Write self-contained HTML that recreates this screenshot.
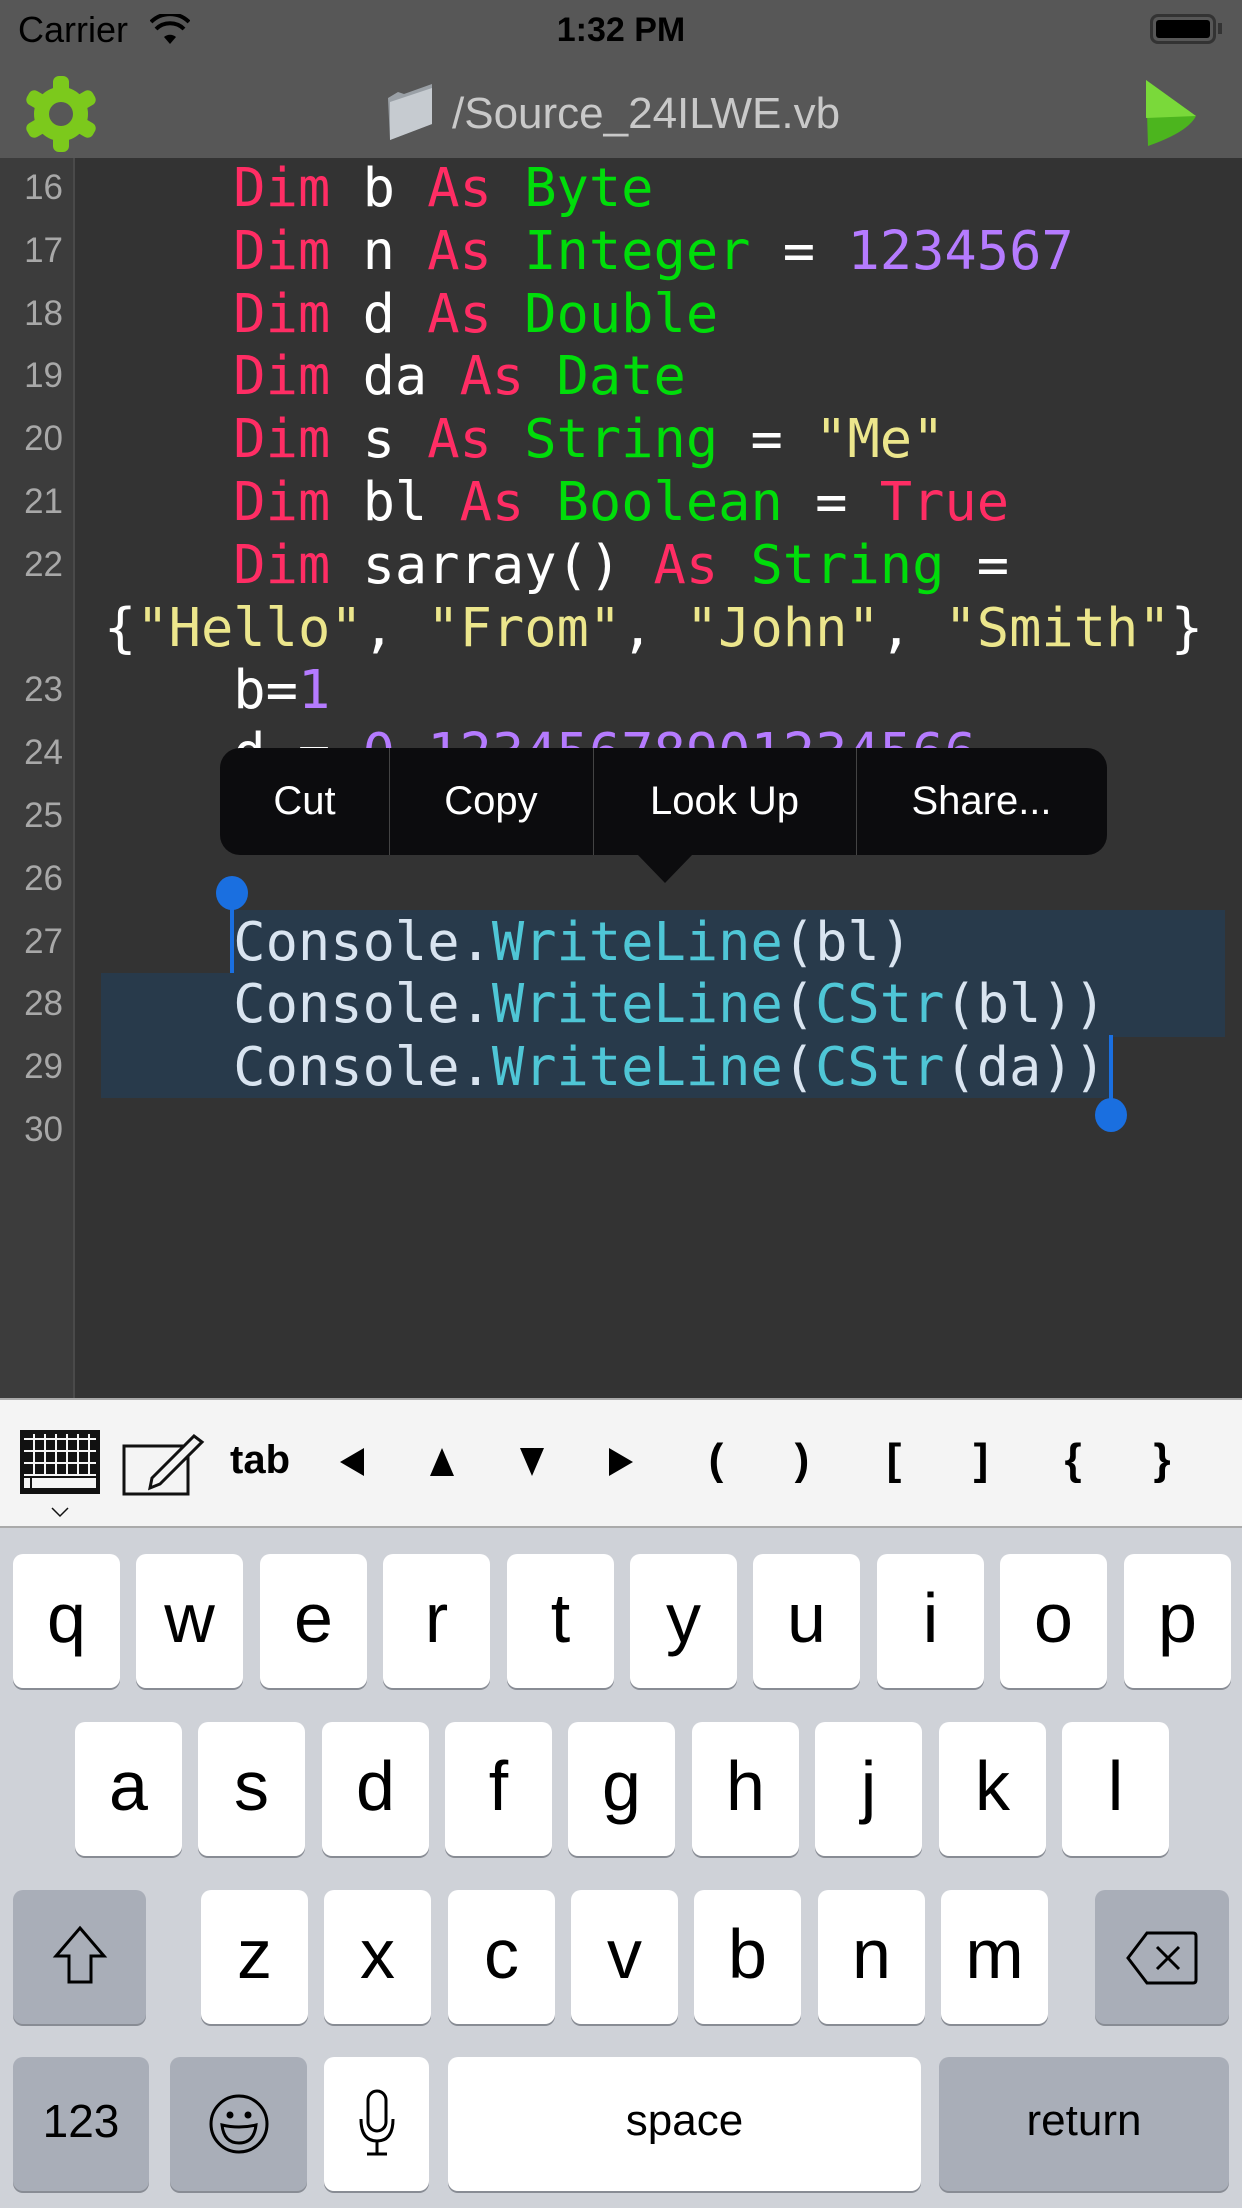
<!DOCTYPE html>
<html><head><meta charset="utf-8"><style>
*{margin:0;padding:0;box-sizing:border-box}
body{width:1242px;height:2208px;overflow:hidden;background:#333;position:relative;font-family:"Liberation Sans",sans-serif}
.abs{position:absolute}
#top{left:0;top:0;width:1242px;height:158px;background:#575757}
#gut{left:0;top:158px;width:75px;height:1240px;background:#3c3c3c;border-right:2px solid #4a4a4a}
.ln{position:absolute;left:0;width:63px;text-align:right;font-size:35px;color:#a8a8a8;line-height:62.8px}
.cl{position:absolute;left:104px;font-family:"DejaVu Sans Mono",monospace;font-size:53.7px;line-height:62.8px;white-space:pre;color:#fff}
.k{color:#ff2d64}.t{color:#00dd0a}.n{color:#b57bff}.s{color:#ece68c}.c{color:#4fc6d6}
.sel{background:#283a4b;position:absolute}
.sl{color:#d9e4f0}
#tb{left:0;top:1398px;width:1242px;height:130px;background:#f4f4f4;border-top:2px solid #aaa;border-bottom:2px solid #aaa}
#kb{left:0;top:1528px;width:1242px;height:680px;background:#cfd2d8}
.key{position:absolute;width:107px;height:134px;background:#fff;border-radius:10px;box-shadow:0 2px 0 #888c94;text-align:center;font-size:70px;line-height:128px;color:#000}
.sp{background:#a9aeb8}
.tbi{position:absolute;top:1430px;font-size:44px;color:#000;line-height:60px;width:40px;text-align:center;margin-left:-20px}
</style></head><body>
<div id="top" class="abs"></div>
<div class="abs" style="left:18px;top:8px;font-size:36px;color:#000;line-height:44px">Carrier</div>
<svg class="abs" style="left:150px;top:14px" width="40" height="32" viewBox="0 0 40 32"><path d="M20 30 L26 23 A9 9 0 0 0 14 23 Z" fill="#000"/><path d="M6 15 A20 20 0 0 1 34 15" stroke="#000" stroke-width="4" fill="none"/><path d="M1 8 A27 27 0 0 1 39 8" stroke="#000" stroke-width="4" fill="none"/></svg>
<div class="abs" style="left:0;width:1242px;top:8px;text-align:center;font-size:34px;font-weight:bold;color:#000;line-height:44px">1:32 PM</div>
<div class="abs" style="left:1150px;top:14px;width:66px;height:30px;border:3px solid #333;border-radius:8px;padding:3px"><div style="width:100%;height:100%;background:#000;border-radius:3px"></div></div>
<div class="abs" style="left:1218px;top:23px;width:4px;height:11px;background:#333"></div>
<svg class="abs" style="left:22px;top:74px" width="78" height="80" viewBox="0 0 78 80"><g fill="#7cc91c"><circle cx="39" cy="40" r="27"/><rect x="31" y="2" width="16" height="76" rx="6"/><rect x="31" y="2" width="16" height="76" rx="6" transform="rotate(60 39 40)"/><rect x="31" y="2" width="16" height="76" rx="6" transform="rotate(120 39 40)"/></g><circle cx="39" cy="40" r="12" fill="#575757"/></svg>
<svg class="abs" style="left:384px;top:84px" width="52" height="56" viewBox="0 0 52 56"><path d="M4 14 L14 8 L20 10 L48 0 L48 40 L6 56 Z" fill="#9aa0a6"/><path d="M6 18 L48 4 L48 40 L6 56 Z" fill="#c6cbd0"/></svg>
<div class="abs" style="left:452px;top:84px;font-size:44px;color:#c9c9c9;line-height:60px">/Source_24ILWE.vb</div>
<svg class="abs" style="left:1144px;top:78px" width="56" height="70" viewBox="0 0 56 70"><path d="M2 2 L52 38 Q44 54 4 68 Z" fill="#4cb51e"/><path d="M2 2 L52 38 L2 40 Z" fill="#7ad93a"/></svg>
<div id="gut" class="abs"></div>
<div class="ln" style="top:157px">16</div><div class="ln" style="top:219.8px">17</div><div class="ln" style="top:282.6px">18</div><div class="ln" style="top:345.4px">19</div><div class="ln" style="top:408.2px">20</div><div class="ln" style="top:471px">21</div><div class="ln" style="top:533.8px">22</div><div class="ln" style="top:659.4px">23</div><div class="ln" style="top:722.2px">24</div><div class="ln" style="top:785px">25</div><div class="ln" style="top:847.8px">26</div><div class="ln" style="top:910.6px">27</div><div class="ln" style="top:973.4px">28</div><div class="ln" style="top:1036.2px">29</div><div class="ln" style="top:1099px">30</div>
<div class="sel" style="left:232px;top:910px;width:993px;height:64px"></div>
<div class="sel" style="left:101px;top:973px;width:1124px;height:64px"></div>
<div class="sel" style="left:101px;top:1036px;width:1011px;height:62px"></div>
<div class="cl" style="top:157px">    <span class="k">Dim</span> b <span class="k">As</span> <span class="t">Byte</span></div>
<div class="cl" style="top:219.8px">    <span class="k">Dim</span> n <span class="k">As</span> <span class="t">Integer</span> = <span class="n">1234567</span></div>
<div class="cl" style="top:282.6px">    <span class="k">Dim</span> d <span class="k">As</span> <span class="t">Double</span></div>
<div class="cl" style="top:345.4px">    <span class="k">Dim</span> da <span class="k">As</span> <span class="t">Date</span></div>
<div class="cl" style="top:408.2px">    <span class="k">Dim</span> s <span class="k">As</span> <span class="t">String</span> = <span class="s">"Me"</span></div>
<div class="cl" style="top:471px">    <span class="k">Dim</span> bl <span class="k">As</span> <span class="t">Boolean</span> = <span class="k">True</span></div>
<div class="cl" style="top:533.8px">    <span class="k">Dim</span> sarray() <span class="k">As</span> <span class="t">String</span> =</div>
<div class="cl" style="top:596.6px">{<span class="s">"Hello"</span>, <span class="s">"From"</span>, <span class="s">"John"</span>, <span class="s">"Smith"</span>}</div>
<div class="cl" style="top:659.4px">    b=<span class="n">1</span></div>
<div class="cl" style="top:722.2px">    d = <span class="n">0.12345678901234566</span></div>
<div class="cl sl" style="top:910.6px">    Console.<span class="c">WriteLine</span>(bl)</div>
<div class="cl sl" style="top:973.4px">    Console.<span class="c">WriteLine</span>(<span class="c">CStr</span>(bl))</div>
<div class="cl sl" style="top:1036.2px">    Console.<span class="c">WriteLine</span>(<span class="c">CStr</span>(da))</div>
<div class="abs" style="left:230px;top:893px;width:4px;height:80px;background:#1a6fe0"></div>
<div class="abs" style="left:216px;top:876px;width:32px;height:34px;border-radius:50%;background:#1a6fe0"></div>
<div class="abs" style="left:1109px;top:1035px;width:4px;height:80px;background:#1a6fe0"></div>
<div class="abs" style="left:1095px;top:1098px;width:32px;height:34px;border-radius:50%;background:#1a6fe0"></div>
<div class="abs" style="left:220px;top:748px;width:887px;height:107px;background:#0c0c0e;border-radius:20px"></div>
<svg class="abs" style="left:637px;top:854px" width="56" height="30"><path d="M0 0 L56 0 L28 29 Z" fill="#0c0c0e"/></svg>
<div class="abs" style="left:389px;top:748px;width:1px;height:107px;background:#444"></div>
<div class="abs" style="left:593px;top:748px;width:1px;height:107px;background:#444"></div>
<div class="abs" style="left:856px;top:748px;width:1px;height:107px;background:#444"></div>
<div class="abs" style="top:777px;left:220px;width:169px;text-align:center;color:#fff;font-size:40px;line-height:48px">Cut</div>
<div class="abs" style="top:777px;left:389px;width:204px;text-align:center;color:#fff;font-size:40px;line-height:48px">Copy</div>
<div class="abs" style="top:777px;left:593px;width:263px;text-align:center;color:#fff;font-size:40px;line-height:48px">Look Up</div>
<div class="abs" style="top:777px;left:856px;width:251px;text-align:center;color:#fff;font-size:40px;line-height:48px">Share...</div>
<div id="tb" class="abs"></div>
<svg class="abs" style="left:18px;top:1428px" width="86" height="96" viewBox="0 0 86 96"><rect x="2" y="2" width="80" height="64" fill="#111"/><g fill="#f4f4f4"><rect x="6" y="10" width="72" height="2"/><rect x="6" y="22" width="72" height="2"/><rect x="6" y="34" width="72" height="2"/><rect x="6" y="46" width="72" height="2"/><rect x="6" y="50" width="72" height="10"/></g><g fill="#f4f4f4"><rect x="15" y="6" width="2" height="40"/><rect x="26" y="6" width="2" height="40"/><rect x="37" y="6" width="2" height="40"/><rect x="48" y="6" width="2" height="40"/><rect x="59" y="6" width="2" height="40"/><rect x="70" y="6" width="2" height="40"/></g><rect x="12" y="50" width="2" height="12" fill="#111"/><path d="M34 80 L42 88 L50 80" stroke="#111" stroke-width="1.5" fill="none"/></svg>
<svg class="abs" style="left:122px;top:1432px" width="86" height="64" viewBox="0 0 86 64"><rect x="2" y="14" width="64" height="48" fill="none" stroke="#111" stroke-width="3"/><path d="M30 46 L72 4 L80 10 L38 52 L28 56 Z" fill="#f4f4f4" stroke="#111" stroke-width="3"/></svg>
<div class="abs" style="left:230px;top:1430px;font-size:40px;font-weight:bold;line-height:60px">tab</div>
<svg class="abs" style="left:0;top:1444px" width="700" height="36"><path d="M340 18 L364 4 L364 32 Z M442 4 L454 32 L430 32 Z M532 32 L544 4 L520 4 Z M633 18 L609 4 L609 32 Z" fill="#000"/></svg>
<div class="tbi" style="left:716px;font-weight:bold">(</div><div class="tbi" style="left:802px;font-weight:bold">)</div>
<div class="tbi" style="left:894px;font-weight:bold">[</div><div class="tbi" style="left:981px;font-weight:bold">]</div>
<div class="tbi" style="left:1073px;font-weight:bold">{</div><div class="tbi" style="left:1162px;font-weight:bold">}</div>
<div id="kb" class="abs"></div>
<div class="key" style="left:13px;top:1554px">q</div><div class="key" style="left:136px;top:1554px">w</div><div class="key" style="left:260px;top:1554px">e</div><div class="key" style="left:383px;top:1554px">r</div><div class="key" style="left:507px;top:1554px">t</div><div class="key" style="left:630px;top:1554px">y</div><div class="key" style="left:753px;top:1554px">u</div><div class="key" style="left:877px;top:1554px">i</div><div class="key" style="left:1000px;top:1554px">o</div><div class="key" style="left:1124px;top:1554px">p</div>
<div class="key" style="left:75px;top:1722px">a</div><div class="key" style="left:198px;top:1722px">s</div><div class="key" style="left:322px;top:1722px">d</div><div class="key" style="left:445px;top:1722px">f</div><div class="key" style="left:568px;top:1722px">g</div><div class="key" style="left:692px;top:1722px">h</div><div class="key" style="left:815px;top:1722px">j</div><div class="key" style="left:939px;top:1722px">k</div><div class="key" style="left:1062px;top:1722px">l</div>
<div class="key sp" style="left:13px;top:1890px;width:133px"><svg width="60" height="64" viewBox="0 0 60 64" style="margin-top:34px"><path d="M30 4 L54 32 L41 32 L41 58 L19 58 L19 32 L6 32 Z" fill="none" stroke="#000" stroke-width="3"/></svg></div>
<div class="key" style="left:201px;top:1890px">z</div><div class="key" style="left:324px;top:1890px">x</div><div class="key" style="left:448px;top:1890px">c</div><div class="key" style="left:571px;top:1890px">v</div><div class="key" style="left:694px;top:1890px">b</div><div class="key" style="left:818px;top:1890px">n</div><div class="key" style="left:941px;top:1890px">m</div>
<div class="key sp" style="left:1095px;top:1890px;width:134px"><svg width="74" height="56" viewBox="0 0 74 56" style="margin-top:40px"><path d="M22 3 L68 3 Q71 3 71 6 L71 50 Q71 53 68 53 L22 53 L3 28 Z" fill="none" stroke="#000" stroke-width="3"/><path d="M32 17 L54 39 M54 17 L32 39" stroke="#000" stroke-width="3"/></svg></div>
<div class="key sp" style="left:13px;top:2057px;width:136px;font-size:46px">123</div>
<div class="key sp" style="left:170px;top:2057px;width:137px"><svg width="62" height="62" viewBox="0 0 62 62" style="margin-top:36px"><circle cx="31" cy="31" r="28" fill="none" stroke="#000" stroke-width="3"/><circle cx="22" cy="22" r="3.5"/><circle cx="40" cy="22" r="3.5"/><path d="M14 32 Q31 36 48 32 Q46 50 31 50 Q16 50 14 32 Z" fill="none" stroke="#000" stroke-width="3"/></svg></div>
<div class="key" style="left:324px;top:2057px;width:105px"><svg width="40" height="70" viewBox="0 0 40 70" style="margin-top:32px"><rect x="11" y="2" width="18" height="40" rx="9" fill="none" stroke="#000" stroke-width="3"/><path d="M4 30 Q4 52 20 52 Q36 52 36 30 M20 52 L20 64 M10 65 L30 65" fill="none" stroke="#000" stroke-width="3"/></svg></div>
<div class="key" style="left:448px;top:2057px;width:473px;font-size:44px">space</div>
<div class="key sp" style="left:939px;top:2057px;width:290px;font-size:44px">return</div>
</body></html>
